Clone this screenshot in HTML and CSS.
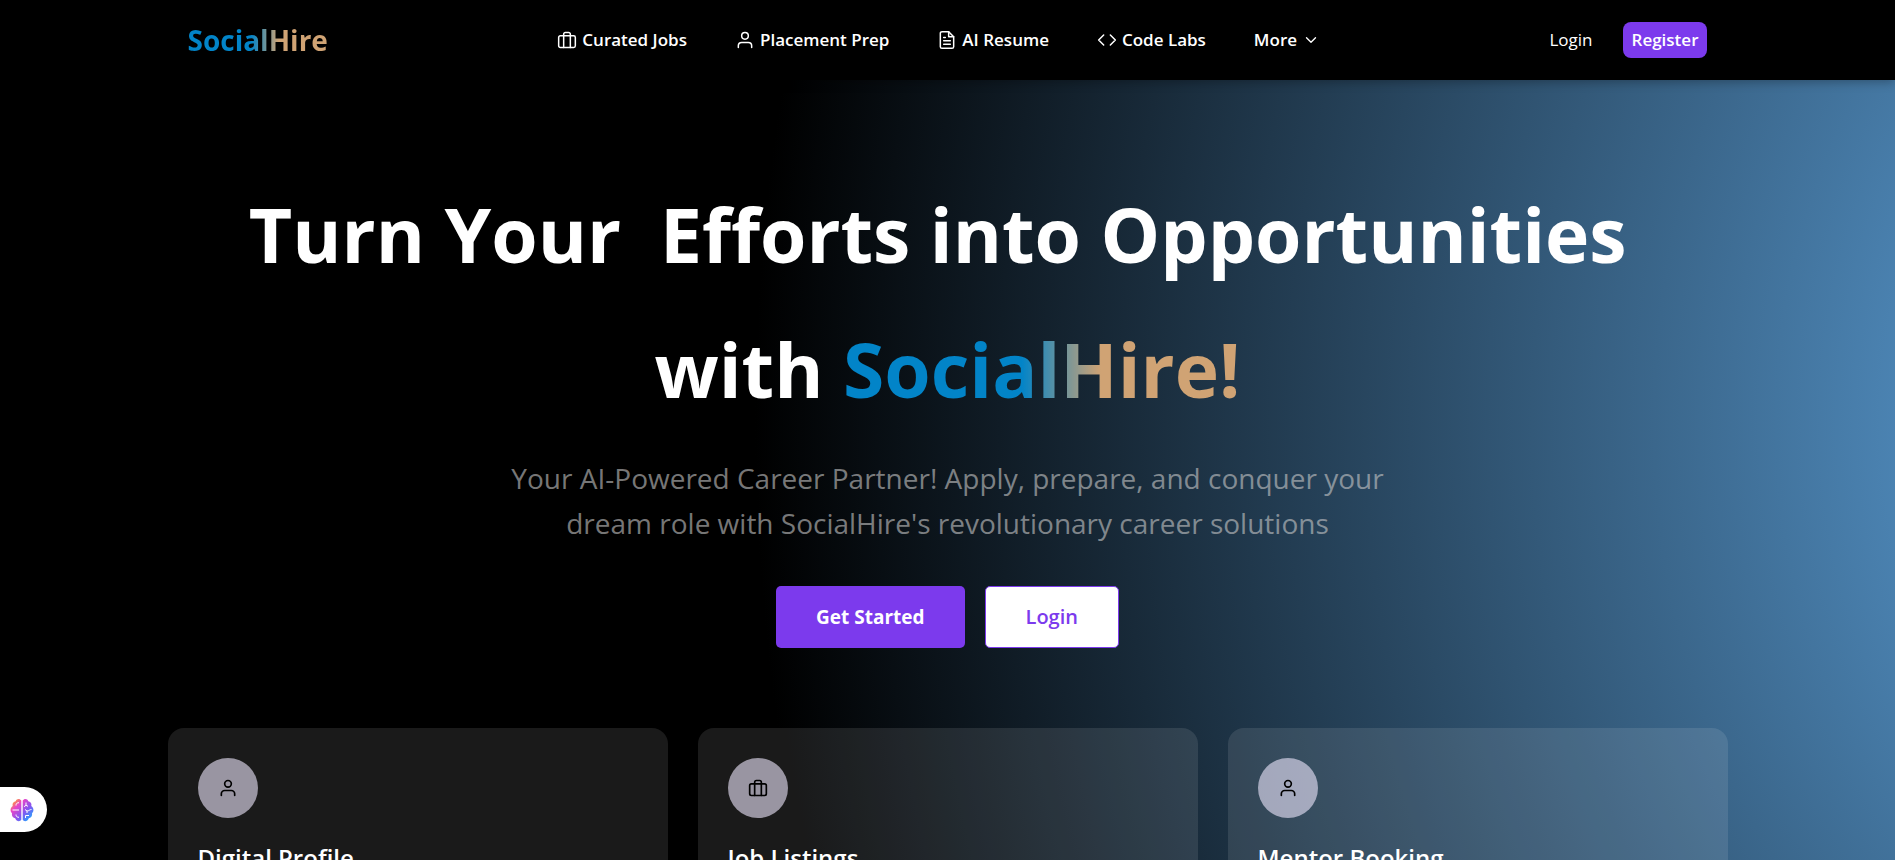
FILE: index.html
```html
<!DOCTYPE html>
<html lang="en">
<head>
<meta charset="utf-8">
<meta name="viewport" content="width=device-width, initial-scale=1">
<title>SocialHire</title>
<link rel="stylesheet" href="styles.css">
</head>
<body>
<svg class="sprite" aria-hidden="true">
  <symbol id="briefcase" viewBox="0 0 24 24"><path d="M16 21V5a2 2 0 0 0-2-2h-4a2 2 0 0 0-2 2v16"/><rect x="2" y="7" width="20" height="14" rx="2"/></symbol>
  <symbol id="user" viewBox="0 0 24 24"><path d="M20 21v-2a4 4 0 0 0-4-4H8a4 4 0 0 0-4 4v2"/><circle cx="12" cy="7" r="4"/></symbol>
  <symbol id="file" viewBox="0 0 24 24"><path d="M14 2H6a2 2 0 0 0-2 2v16a2 2 0 0 0 2 2h12a2 2 0 0 0 2-2V8z"/><path d="M14 2v6h6M16 13H8M16 17H8M10 9H8"/></symbol>
  <symbol id="code" viewBox="0 0 24 24"><path d="M16 18l6-6-6-6M8 6l-6 6 6 6"/></symbol>
  <symbol id="chevron" viewBox="0 0 24 24"><path d="M6 9l6 6 6-6"/></symbol>
</svg>
<header class="header">
  <div class="header-inner">
    <a class="logo brand" href="#">SocialHire</a>
    <nav class="nav">
      <a class="nav-link" href="#"><svg class="icon"><use href="#briefcase"/></svg>Curated Jobs</a>
      <a class="nav-link" href="#"><svg class="icon"><use href="#user"/></svg>Placement Prep</a>
      <a class="nav-link" href="#"><svg class="icon"><use href="#file"/></svg>AI Resume</a>
      <a class="nav-link" href="#"><svg class="icon"><use href="#code"/></svg>Code Labs</a>
      <button class="nav-link" type="button">More<svg class="icon"><use href="#chevron"/></svg></button>
    </nav>
    <div class="account">
      <a class="nav-link" href="#">Login</a>
      <a class="nav-link register" href="#">Register</a>
    </div>
  </div>
</header>
<main class="hero">
  <h1 class="title">Turn Your &nbsp;Efforts into Opportunities&nbsp;<br>with <span class="brand">SocialHire!</span></h1>
  <p class="lead">Your AI-Powered Career Partner! Apply, prepare, and conquer your dream role with SocialHire's revolutionary career solutions</p>
  <div class="actions">
    <a class="btn btn-primary" href="#">Get Started</a>
    <a class="btn btn-outline" href="#">Login</a>
  </div>
  <section class="cards">
    <article class="card"><div class="badge"><svg class="icon"><use href="#user"/></svg></div><h2 class="card-title">Digital Profile</h2></article>
    <article class="card"><div class="badge"><svg class="icon"><use href="#briefcase"/></svg></div><h2 class="card-title">Job Listings</h2></article>
    <article class="card"><div class="badge"><svg class="icon"><use href="#user"/></svg></div><h2 class="card-title">Mentor Booking</h2></article>
  </section>
</main>
<button class="assistant" type="button" aria-label="Open assistant">
  <svg class="brain" viewBox="0 0 24 24">
    <defs><linearGradient id="brainFill" x1="0" y1="0" x2="1" y2="1"><stop offset=".1" stop-color="#ffa02e"/><stop offset=".3" stop-color="#e945c8"/><stop offset=".6" stop-color="#8556f0"/><stop offset=".9" stop-color="#22a5ff"/></linearGradient></defs>
    <path fill="url(#brainFill)" d="M11.300 2.500C10 .2 6.500.3 5.700 3.200 3.200 3.500 2 6 2.800 8 .2 9.500-.2 13.500 2 15.200c-.6 2.700 1 4.800 3.200 5.100 1 3.200 4.800 3.700 6.100 1.500zM12.700 2.500C14 .2 17.500.3 18.300 3.200c2.500.3 3.700 2.800 2.900 4.800 2.600 1.500 3 5.500.8 7.200.6 2.700-1 4.800-3.200 5.100-1 3.200-4.800 3.700-6.100 1.500z"/>
    <path class="brain-lines" d="M6 7.500c0-2 1-2.800 3-2.800M2.500 12H9M6 16.500c0 2 1 2.800 3 2.800M16 4.500v2.800l-2 1.400M16 7.300l2 1M21.500 11.500c-2 0-2.500 1.500-4.500 1.500l-2-1.500M17 13v2M19 17.500h-3.500V20"/>
  </svg>
</button>
</body>
</html>
```
FILE: styles.css
```css
* { box-sizing: border-box; }
body {
  margin: 0;
  height: 100vh;
  overflow: hidden;
  color: #fff;
  font-family: "Open Sans", "Noto Sans", sans-serif;
  background: radial-gradient(ellipse 1545px 1800px at calc(100% + 405px) 49%, #4b83b2 26%, #000 100%) #000;
}
a { color: inherit; text-decoration: none; }
.sprite { display: none; }
.icon {
  width: 20px;
  height: 20px;
  flex: none;
  fill: none;
  stroke: currentColor;
  stroke-width: 2;
  stroke-linecap: round;
  stroke-linejoin: round;
}
.brand {
  color: transparent;
  background: linear-gradient(90deg, #0284c8 45%, #d0a374 65%);
  -webkit-background-clip: text;
  background-clip: text;
}
.header {
  position: relative;
  background: #000;
  box-shadow: 0 2px 10px rgba(0, 0, 0, .3);
}
.header-inner {
  display: flex;
  align-items: center;
  justify-content: space-between;
  max-width: 1560px;
  height: 80px;
  margin: 0 auto;
  padding: 0 20px;
}
.logo { font-size: 28px; font-weight: 700; }
.nav { display: flex; gap: 48px; }
.nav-link {
  display: flex;
  align-items: center;
  gap: 5px;
  padding: 0;
  border: 0;
  color: #fff;
  background: none;
  font: 600 17px/36px "Open Sans", "Noto Sans", sans-serif;
}
.nav .icon { stroke-width: 1.8; }
.nav button .icon { width: 18px; }
.account { display: flex; gap: 30px; }
.account .nav-link { font-weight: 500; }
.account .register { padding: 0 9px; border-radius: 8px; background: #7c3aed; font-weight: 600; }
.hero {
  display: flex;
  flex-direction: column;
  align-items: center;
  max-width: 1560px;
  margin: 0 auto;
  padding-top: 87px;
}
.title {
  margin: 0;
  font-size: 75px;
  font-weight: 700;
  line-height: 135px;
  text-align: center;
  white-space: nowrap;
}
.lead {
  max-width: 900px;
  margin: 19px 0 0;
  color: rgba(200, 200, 200, .6);
  font-size: 28px;
  line-height: 45px;
  text-align: center;
}
.actions { display: flex; gap: 20px; margin-top: 40px; }
.btn {
  padding: 15px 40px;
  border-radius: 5px;
  font-size: 19px;
  line-height: 32px;
}
.btn-primary { font-weight: 700; background: #7c3aed; }
.btn-outline {
  padding: 14px 40px;
  border: 1px solid #7c3aed;
  color: #7c3aed;
  background: #fff;
  font-weight: 600;
  font-size: 20px;
}
.cards {
  display: grid;
  grid-template-columns: repeat(3, 1fr);
  gap: 30px;
  width: 100%;
  margin-top: 80px;
}
.card {
  padding: 30px;
  min-height: 300px;
  border-radius: 16px;
  background: rgba(255, 255, 255, .1);
}
.badge {
  display: grid;
  place-items: center;
  width: 60px;
  height: 60px;
  border-radius: 50%;
  color: #000;
  background: rgba(238, 232, 254, .6);
}
.card-title { margin: 20px 0 0; font-size: 24px; font-weight: 600; line-height: 40px; }
.assistant {
  position: fixed;
  left: 0;
  bottom: 28px;
  display: flex;
  align-items: center;
  width: 47px;
  height: 45px;
  padding: 0 0 0 10px;
  border: 0;
  border-radius: 0 23px 23px 0;
  background: #fff;
}
.brain { width: 24px; height: 24px; }
.brain-lines { fill: none; stroke: #fff; stroke-width: 1; }
```
